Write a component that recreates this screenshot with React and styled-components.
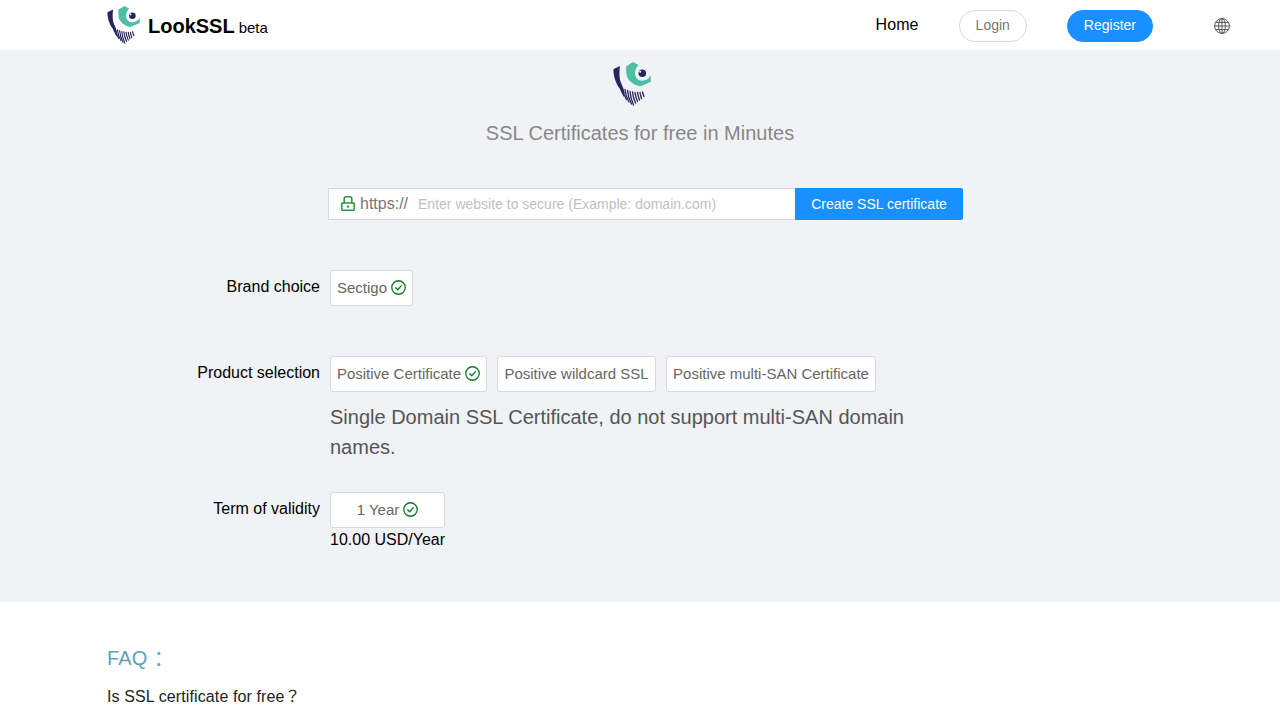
import React from "react"
import styled, { createGlobalStyle } from "styled-components"

const GlobalStyle = createGlobalStyle`
	html, body {
		margin: 0;
		padding: 0;
		background: #fff;
		font-family: "Liberation Sans", Arial, "Noto Sans CJK JP", sans-serif;
	}
	* {
		box-sizing: border-box;
	}
`

const stripes = [
	[7, 23, 11, 34],
	[9.5, 26, 13.5, 37.5],
	[12, 27.5, 16, 40],
	[14.5, 28.5, 18.5, 42],
	[17, 29.5, 20.5, 43],
	[19.5, 30, 22.5, 41],
	[22, 30.5, 24.5, 39.5],
	[24.5, 30.5, 26.5, 38],
	[27, 30.5, 28.5, 36.5],
	[29.5, 30, 31, 34.5],
]

const Logo = ({ width = 38, height = 44 }) => (
	<svg width={width} height={height} viewBox="0 0 38 44" fill="none">
		{/* navy wing */}
		<path d="M0.4 7.2 L7 4 C6 11 6.2 18 9 23 L12 32 C4.5 26 0.4 17 0.4 7.2 Z" fill="#27265f" />
		{/* striped tail */}
		<g stroke="#27265f" strokeWidth="1.35" strokeLinecap="round">
			{stripes.map(([x1, y1, x2, y2], i) => (
				<path key={i} d={`M${x1} ${y1} Q${x1 + 0.5} ${(y1 + y2) / 2} ${x2} ${y2}`} />
			))}
		</g>
		{/* teal arc */}
		<path
			d="M13 4.4 L20 0 L25.5 3 C23.4 5 22 8.4 22 11.6 C22 15.8 25.4 18.8 29 18.8 C32.6 18.8 35.6 17 37.8 13.6 L37.8 19.8 L27 24.4 C19.4 22.6 14.2 18 13.4 12.6 Z"
			fill="#4fbfa3"
		/>
		{/* eye */}
		<circle cx="29.3" cy="11.3" r="3.8" fill="#27265f" />
		<circle cx="27.2" cy="9.8" r="1" fill="#fff" />
	</svg>
)

const Check = () => (
	<svg width="15" height="15" viewBox="0 0 16 16" fill="none" stroke="#0f7a26" strokeWidth="1.4">
		<circle cx="8" cy="8" r="7.2" />
		<path d="M5 8.2 L7.2 10.4 L11 6" strokeLinecap="round" strokeLinejoin="round" />
	</svg>
)

const Lock = () => (
	<svg width="14" height="15" viewBox="0 0 14 15" fill="none" stroke="#2c9440" strokeWidth="1.5">
		<rect x="0.8" y="7" width="12.4" height="7.2" rx="0.6" />
		<path d="M3.2 7 V2.6 Q3.2 0.8 5 0.8 H9 Q10.8 0.8 10.8 2.6 V7" />
		<circle cx="7" cy="10.6" r="1.2" fill="#2c9440" stroke="none" />
	</svg>
)

const Globe = () => (
	<svg width="16" height="16" viewBox="0 0 16 16" fill="none" stroke="#555" strokeWidth="1">
		<circle cx="8" cy="8" r="7.4" />
		<ellipse cx="8" cy="8" rx="3.4" ry="7.4" />
		<path d="M8 0.6 V15.4 M0.6 8 H15.4 M1.6 4.4 H14.4 M1.6 11.6 H14.4" />
	</svg>
)

const App = () => {
	return (
		<>
			<GlobalStyle />
			<Header>
				<Brand>
					<Logo width={33} height={38} />
					<BrandName>LookSSL</BrandName>
					<BrandTag>beta</BrandTag>
				</Brand>
				<Nav>
					<HomeLink>Home</HomeLink>
					<PillButton>Login</PillButton>
					<PillButton primary>Register</PillButton>
					<GlobeIcon>
						<Globe />
					</GlobeIcon>
				</Nav>
			</Header>
			<Hero>
				<HeroLogo>
					<Logo />
				</HeroLogo>
				<Tagline>SSL Certificates for free in Minutes</Tagline>
				<SearchBar>
					<SearchField>
						<Lock />
						<Scheme>https://</Scheme>
						<SearchInput placeholder="Enter website to secure (Example: domain.com)" />
					</SearchField>
					<SearchButton>Create SSL certificate</SearchButton>
				</SearchBar>
				<FormRow top={50}>
					<RowLabel>Brand choice</RowLabel>
					<RowBody>
						<Options>
							<Option width={83}>
								Sectigo <Check />
							</Option>
						</Options>
					</RowBody>
				</FormRow>
				<FormRow top={50}>
					<RowLabel>Product selection</RowLabel>
					<RowBody>
						<Options>
							<Option width={157}>
								Positive Certificate <Check />
							</Option>
							<Option width={159}>Positive wildcard SSL</Option>
							<Option width={210}>Positive multi-SAN Certificate</Option>
						</Options>
						<Description>Single Domain SSL Certificate, do not support multi-SAN domain names.</Description>
					</RowBody>
				</FormRow>
				<FormRow top={30}>
					<RowLabel>Term of validity</RowLabel>
					<RowBody>
						<Options>
							<Option width={115}>
								1 Year <Check />
							</Option>
						</Options>
						<Price>10.00 USD/Year</Price>
					</RowBody>
				</FormRow>
			</Hero>
			<Faq>
				<FaqTitle>
					FAQ<FaqColon>：</FaqColon>
				</FaqTitle>
				<FaqQuestion>Is SSL certificate for free？</FaqQuestion>
			</Faq>
		</>
	)
}

const Header = styled.header`
	height: 50px;
	background: #fff;
	display: flex;
	align-items: center;
	justify-content: space-between;
	padding: 0 50px 0 107px;
`

const Brand = styled.div`
	display: flex;
	align-items: center;
`

const BrandName = styled.span`
	font-size: 20px;
	font-weight: 700;
	color: #000;
	margin-left: 8px;
	padding-top: 2px;
`

const BrandTag = styled.span`
	font-size: 15px;
	color: #000;
	margin-left: 4px;
	padding-top: 5px;
`

const Nav = styled.nav`
	display: flex;
	align-items: center;
	padding-top: 2px;
`

const HomeLink = styled.a`
	font-size: 16px;
	letter-spacing: 0.1px;
	color: #000;
	margin-right: 40px;
	margin-top: -3px;
`

const PillButton = styled.button`
	height: 32px;
	padding: 0 16px 2px;
	border-radius: 16px;
	font-family: inherit;
	font-size: 14px;
	margin-right: 40px;
	border: 1px solid ${(p) => (p.primary ? "#1890ff" : "#d9d9d9")};
	background: ${(p) => (p.primary ? "#1890ff" : "#fff")};
	color: ${(p) => (p.primary ? "#fff" : "#777")};
	&:last-of-type {
		margin-right: 61px;
	}
`

const GlobeIcon = styled.span`
	display: flex;
`

const Hero = styled.main`
	background: #f0f2f6;
	height: 552px;
	padding-top: 12px;
`

const HeroLogo = styled.div`
	display: flex;
	justify-content: center;
	padding-right: 16px;
	height: 44px;
`

const Tagline = styled.div`
	text-align: center;
	font-size: 20px;
	line-height: 28px;
	color: #888;
	margin-top: 13px;
`

const SearchBar = styled.div`
	display: flex;
	width: 635px;
	height: 32px;
	margin: 41px 0 0 328px;
`

const SearchField = styled.div`
	flex: 1;
	display: flex;
	align-items: center;
	background: #fff;
	border: 1px solid #d9d9d9;
	border-right: 0;
	padding-left: 12px;

	svg {
		margin-bottom: 1px;
	}
`

const Scheme = styled.span`
	font-size: 16px;
	color: #777;
	margin-left: 5px;
`

const SearchInput = styled.input`
	flex: 1;
	min-width: 0;
	border: 0;
	outline: 0;
	font-family: inherit;
	font-size: 14px;
	padding: 0 10px;
	background: transparent;
	&::placeholder {
		color: #bfbfbf;
		opacity: 1;
	}
`

const SearchButton = styled.button`
	width: 168px;
	border: 0;
	background: #1890ff;
	color: #fff;
	font-family: inherit;
	font-size: 14px;
	border-radius: 0 2px 2px 0;
`

const FormRow = styled.div`
	display: flex;
	margin-top: ${(p) => p.top}px;
`

const RowLabel = styled.div`
	width: 320px;
	text-align: right;
	font-size: 16px;
	line-height: 34px;
	color: #000;
`

const RowBody = styled.div`
	width: 600px;
	margin-left: 10px;
`

const Options = styled.div`
	display: flex;
	gap: 10px;
`

const Option = styled.div`
	height: 36px;
	width: ${(p) => p.width}px;
	display: flex;
	align-items: center;
	justify-content: center;
	gap: 4px;
	padding-bottom: 2px;
	background: #fff;
	border: 1px solid #d9d9d9;
	border-radius: 3px;
	font-size: 15px;
	color: #666;
	white-space: nowrap;
`

const Description = styled.div`
	font-size: 20px;
	line-height: 30px;
	color: #555;
	margin-top: 10px;
`

const Price = styled.div`
	font-size: 16px;
	line-height: 22px;
	color: #000;
	margin-top: 1px;
`

const Faq = styled.section`
	background: #fff;
	padding: 42px 107px 0;
	height: 118px;
	overflow: hidden;
`

const FaqTitle = styled.div`
	height: 28px;
	font-size: 20px;
	line-height: 28px;
	letter-spacing: 0.2px;
	color: #5aa3b8;
`

const FaqColon = styled.span`
	vertical-align: -2px;
	margin-left: 1px;
`

const FaqQuestion = styled.div`
	font-size: 16px;
	line-height: 24px;
	letter-spacing: 0.11px;
	color: #222;
	margin-top: 13px;
`

export default App
